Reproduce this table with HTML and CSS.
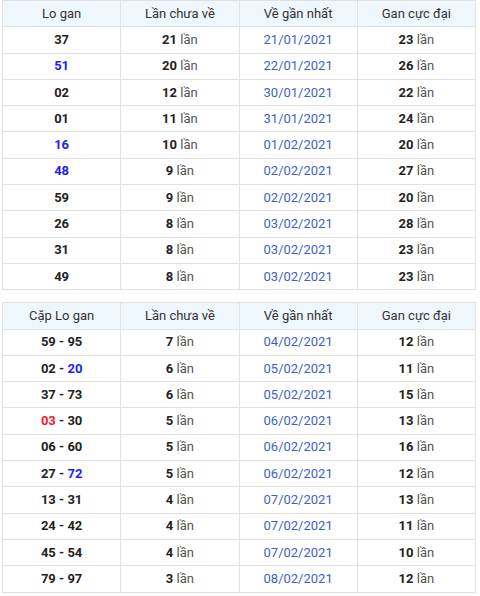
FILE: index.html
```html
<!DOCTYPE html>
<html>
<head>
<meta charset="utf-8">
<link rel="stylesheet" href="styles.css">
</head>
<body>
<div class="wrap">
<table class="gan">
<thead><tr><th>Lo gan</th><th>Lần chưa về</th><th>Về gần nhất</th><th>Gan cực đại</th></tr></thead>
<tbody>
<tr><td><b>37</b></td><td><b>21</b> <span class="l">lần</span></td><td class="d">21/01/2021</td><td><b>23</b> <span class="l">lần</span></td></tr>
<tr><td><b class="bl">51</b></td><td><b>20</b> <span class="l">lần</span></td><td class="d">22/01/2021</td><td><b>26</b> <span class="l">lần</span></td></tr>
<tr><td><b>02</b></td><td><b>12</b> <span class="l">lần</span></td><td class="d">30/01/2021</td><td><b>22</b> <span class="l">lần</span></td></tr>
<tr><td><b>01</b></td><td><b>11</b> <span class="l">lần</span></td><td class="d">31/01/2021</td><td><b>24</b> <span class="l">lần</span></td></tr>
<tr><td><b class="bl">16</b></td><td><b>10</b> <span class="l">lần</span></td><td class="d">01/02/2021</td><td><b>20</b> <span class="l">lần</span></td></tr>
<tr><td><b class="bl">48</b></td><td><b>9</b> <span class="l">lần</span></td><td class="d">02/02/2021</td><td><b>27</b> <span class="l">lần</span></td></tr>
<tr><td><b>59</b></td><td><b>9</b> <span class="l">lần</span></td><td class="d">02/02/2021</td><td><b>20</b> <span class="l">lần</span></td></tr>
<tr><td><b>26</b></td><td><b>8</b> <span class="l">lần</span></td><td class="d">03/02/2021</td><td><b>28</b> <span class="l">lần</span></td></tr>
<tr><td><b>31</b></td><td><b>8</b> <span class="l">lần</span></td><td class="d">03/02/2021</td><td><b>23</b> <span class="l">lần</span></td></tr>
<tr><td><b>49</b></td><td><b>8</b> <span class="l">lần</span></td><td class="d">03/02/2021</td><td><b>23</b> <span class="l">lần</span></td></tr>
</tbody>
</table>
<table class="gan">
<thead><tr><th>Cặp Lo gan</th><th>Lần chưa về</th><th>Về gần nhất</th><th>Gan cực đại</th></tr></thead>
<tbody>
<tr><td><b>59 - 95</b></td><td><b>7</b> <span class="l">lần</span></td><td class="d">04/02/2021</td><td><b>12</b> <span class="l">lần</span></td></tr>
<tr><td><b>02 - <span class="bl">20</span></b></td><td><b>6</b> <span class="l">lần</span></td><td class="d">05/02/2021</td><td><b>11</b> <span class="l">lần</span></td></tr>
<tr><td><b>37 - 73</b></td><td><b>6</b> <span class="l">lần</span></td><td class="d">05/02/2021</td><td><b>15</b> <span class="l">lần</span></td></tr>
<tr><td><b><span class="rd">03</span> - 30</b></td><td><b>5</b> <span class="l">lần</span></td><td class="d">06/02/2021</td><td><b>13</b> <span class="l">lần</span></td></tr>
<tr><td><b>06 - 60</b></td><td><b>5</b> <span class="l">lần</span></td><td class="d">06/02/2021</td><td><b>16</b> <span class="l">lần</span></td></tr>
<tr><td><b>27 - <span class="bl">72</span></b></td><td><b>5</b> <span class="l">lần</span></td><td class="d">06/02/2021</td><td><b>12</b> <span class="l">lần</span></td></tr>
<tr><td><b>13 - 31</b></td><td><b>4</b> <span class="l">lần</span></td><td class="d">07/02/2021</td><td><b>13</b> <span class="l">lần</span></td></tr>
<tr><td><b>24 - 42</b></td><td><b>4</b> <span class="l">lần</span></td><td class="d">07/02/2021</td><td><b>11</b> <span class="l">lần</span></td></tr>
<tr><td><b>45 - 54</b></td><td><b>4</b> <span class="l">lần</span></td><td class="d">07/02/2021</td><td><b>10</b> <span class="l">lần</span></td></tr>
<tr><td><b>79 - 97</b></td><td><b>3</b> <span class="l">lần</span></td><td class="d">08/02/2021</td><td><b>12</b> <span class="l">lần</span></td></tr>
</tbody>
</table>
</div>
</body>
</html>
```
FILE: styles.css
```css
html, body {
  margin: 0;
  padding: 0;
  background: #ffffff;
}
.wrap {
  padding: 0 4px 0 2px;
  display: flex;
  flex-direction: column;
  gap: 12px;
}
.gan {
  width: 100%;
  border-collapse: collapse;
  table-layout: fixed;
  font-family: Roboto, "Liberation Sans", sans-serif;
  font-size: 13px;
  color: #222;
}
.gan th, .gan td {
  border: 1px solid #e1e1e1;
  height: 25.3px;
  padding: 0;
  text-align: center;
  vertical-align: middle;
  line-height: 16px;
}
.gan th {
  background: #eef6fe;
  font-weight: normal;
  color: #333;
}
.gan b {
  font-weight: bold;
  color: #222;
}
.gan .l {
  color: #555;
}
.gan .d {
  color: #3d62c7;
}
.gan .bl {
  color: #1c1cf5;
}
.gan .rd {
  color: #e8212d;
}
```
